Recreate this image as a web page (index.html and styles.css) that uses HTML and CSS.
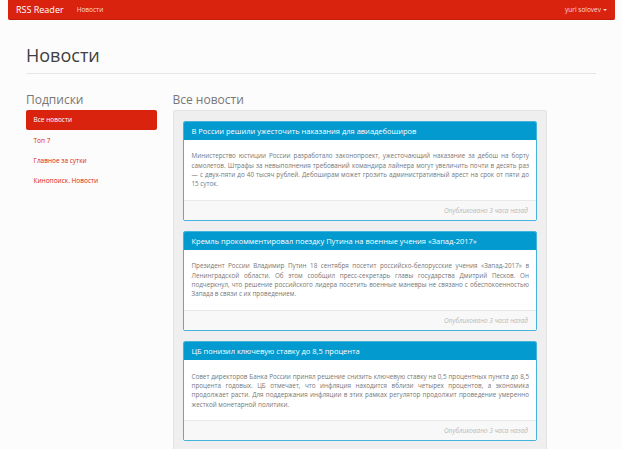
FILE: index.html
```html
<!DOCTYPE html>
<html lang="ru">
<head>
<meta charset="utf-8">
<title>RSS Reader</title>
<link rel="stylesheet" href="styles.css">
</head>
<body>
<nav class="navbar">
  <div class="nav-left">
    <a class="brand" href="#">RSS Reader</a>
    <a class="nav-link" href="#">Новости</a>
  </div>
  <a class="nav-link user" href="#">yuri solovev<span class="caret"></span></a>
</nav>
<main class="container">
  <div class="page-header">
    <h1>Новости</h1>
  </div>
  <div class="row">
    <aside class="sidebar">
      <h3>Подписки</h3>
      <ul class="pills">
        <li class="active"><a href="#">Все новости</a></li>
        <li><a href="#">Топ 7</a></li>
        <li><a href="#">Главное за сутки</a></li>
        <li><a href="#">Кинопоиск. Новости</a></li>
      </ul>
    </aside>
    <section class="content">
      <h3>Все новости</h3>
      <div class="well">
        <article class="panel">
          <div class="panel-heading">В России решили ужесточить наказания для авиадебоширов</div>
          <div class="panel-body"><span class="ln">Министерство юстиции России разработало законопроект, ужесточающий наказание за дебош на борту</span> <span class="ln">самолетов. Штрафы за невыполнения требований командира лайнера могут увеличить почти в десять раз</span> <span class="ln">— с двух-пяти до 40 тысяч рублей. Дебоширам может грозить административный арест на срок от пяти до</span> <span class="last">15 суток.</span></div>
          <div class="panel-footer">Опубликовано 3 часа назад</div>
        </article>
        <article class="panel">
          <div class="panel-heading">Кремль прокомментировал поездку Путина на военные учения «Запад-2017»</div>
          <div class="panel-body"><span class="ln">Президент России Владимир Путин 18 сентября посетит российско-белорусские учения «Запад-2017» в</span> <span class="ln">Ленинградской области. Об этом сообщил пресс-секретарь главы государства Дмитрий Песков. Он</span> <span class="ln">подчеркнул, что решение российского лидера посетить военные маневры не связано с обеспокоенностью</span> <span class="last">Запада в связи с их проведением.</span></div>
          <div class="panel-footer">Опубликовано 3 часа назад</div>
        </article>
        <article class="panel">
          <div class="panel-heading">ЦБ понизил ключевую ставку до 8,5 процента</div>
          <div class="panel-body"><span class="ln">Совет директоров Банка России принял решение снизить ключевую ставку на 0,5 процентных пункта до 8,5</span> <span class="ln">процента годовых. ЦБ отмечает, что инфляция находится вблизи четырех процентов, а экономика</span> <span class="ln">продолжает расти. Для поддержания инфляции в этих рамках регулятор продолжит проведение умеренно</span> <span class="last">жесткой монетарной политики.</span></div>
          <div class="panel-footer">Опубликовано 3 часа назад</div>
        </article>
      </div>
    </section>
  </div>
</main>
</body>
</html>
```

FILE: styles.css
```css
* { box-sizing: border-box; }
html, body { margin: 0; padding: 0; }
body {
  background: #fcfcfc;
  font-family: "Open Sans", "Liberation Sans", sans-serif;
  font-size: 6.5px;
  line-height: 1.4286;
  color: #777;
  overflow: hidden;
  height: 449px;
}
a { text-decoration: none; }

.navbar {
  margin: 0 7.5px;
  height: 20px;
  background: #d9230f;
  border-radius: 0 0 2px 2px;
  border-bottom: 1px solid #c01f0d;
  display: flex;
  align-items: center;
  justify-content: space-between;
}
.nav-left { display: flex; align-items: center; }
.brand {
  color: #fff;
  font-size: 9px;
  padding: 0 5.5px 0 8.5px;
  line-height: 20px;
}
.nav-link {
  color: #fdd9d4;
  font-size: 6.5px;
  padding: 0 7.5px;
  line-height: 20px;
}
.user { display: flex; align-items: center; }
.caret {
  display: inline-block;
  width: 0; height: 0;
  margin-left: 2px;
  border-top: 2px solid #fdd9d4;
  border-left: 2px solid transparent;
  border-right: 2px solid transparent;
}

.container {
  width: 585px;
  margin: 0 auto;
  padding: 0 7.5px;
}
.page-header {
  margin-top: 26px;
  padding-bottom: 7.7px;
  border-bottom: 1px solid #e6e6e6;
  margin-bottom: 19px;
}
h1 {
  margin: 0;
  font-size: 18px;
  line-height: 1.1;
  font-weight: 400;
  color: #404040;
}
h3 {
  margin: 0 0 3.6px;
  font-size: 12px;
  line-height: 1.1;
  font-weight: 400;
  color: #777;
}
.row { display: flex; gap: 15.5px; align-items: flex-start; }
.sidebar { width: 131px; flex: none; }
.content { width: 374.5px; flex: none; }

.pills { list-style: none; margin: 0; padding: 0; }
.pills li + li { margin-top: 1px; }
.pills a {
  display: block;
  padding: 5px 7.5px;
  color: #d9230f;
  border-radius: 2px;
}
.pills .active a { background: #d9230f; color: #fff; }

.well {
  background: #efefef;
  border: 1px solid #e3e3e3;
  border-radius: 2px;
  padding: 9.5px;
  height: 400px;
}
.panel {
  background: #fff;
  border: 1px solid #45b3dc;
  border-radius: 2px;
  margin-bottom: 10px;
  overflow: hidden;
}
.panel-heading {
  background: #039ad0;
  color: #fff;
  font-size: 7.5px;
  line-height: 1.1;
  padding: 5px 7.5px;
}
.panel-body {
  padding: 11.25px 6.5px 11.25px 7.5px;
  font-size: 6.3px;
  line-height: 9.3px;
}
.panel-body .ln {
  display: block;
  white-space: nowrap;
  text-align: justify;
  text-align-last: justify;
}
.panel-body .last { display: block; }
.panel-footer {
  background: #f8f8f8;
  border-top: 1px solid #e8e8e8;
  padding: 5px 7.5px;
  text-align: right;
  font-style: italic;
  color: #b8b8b8;
}
```
